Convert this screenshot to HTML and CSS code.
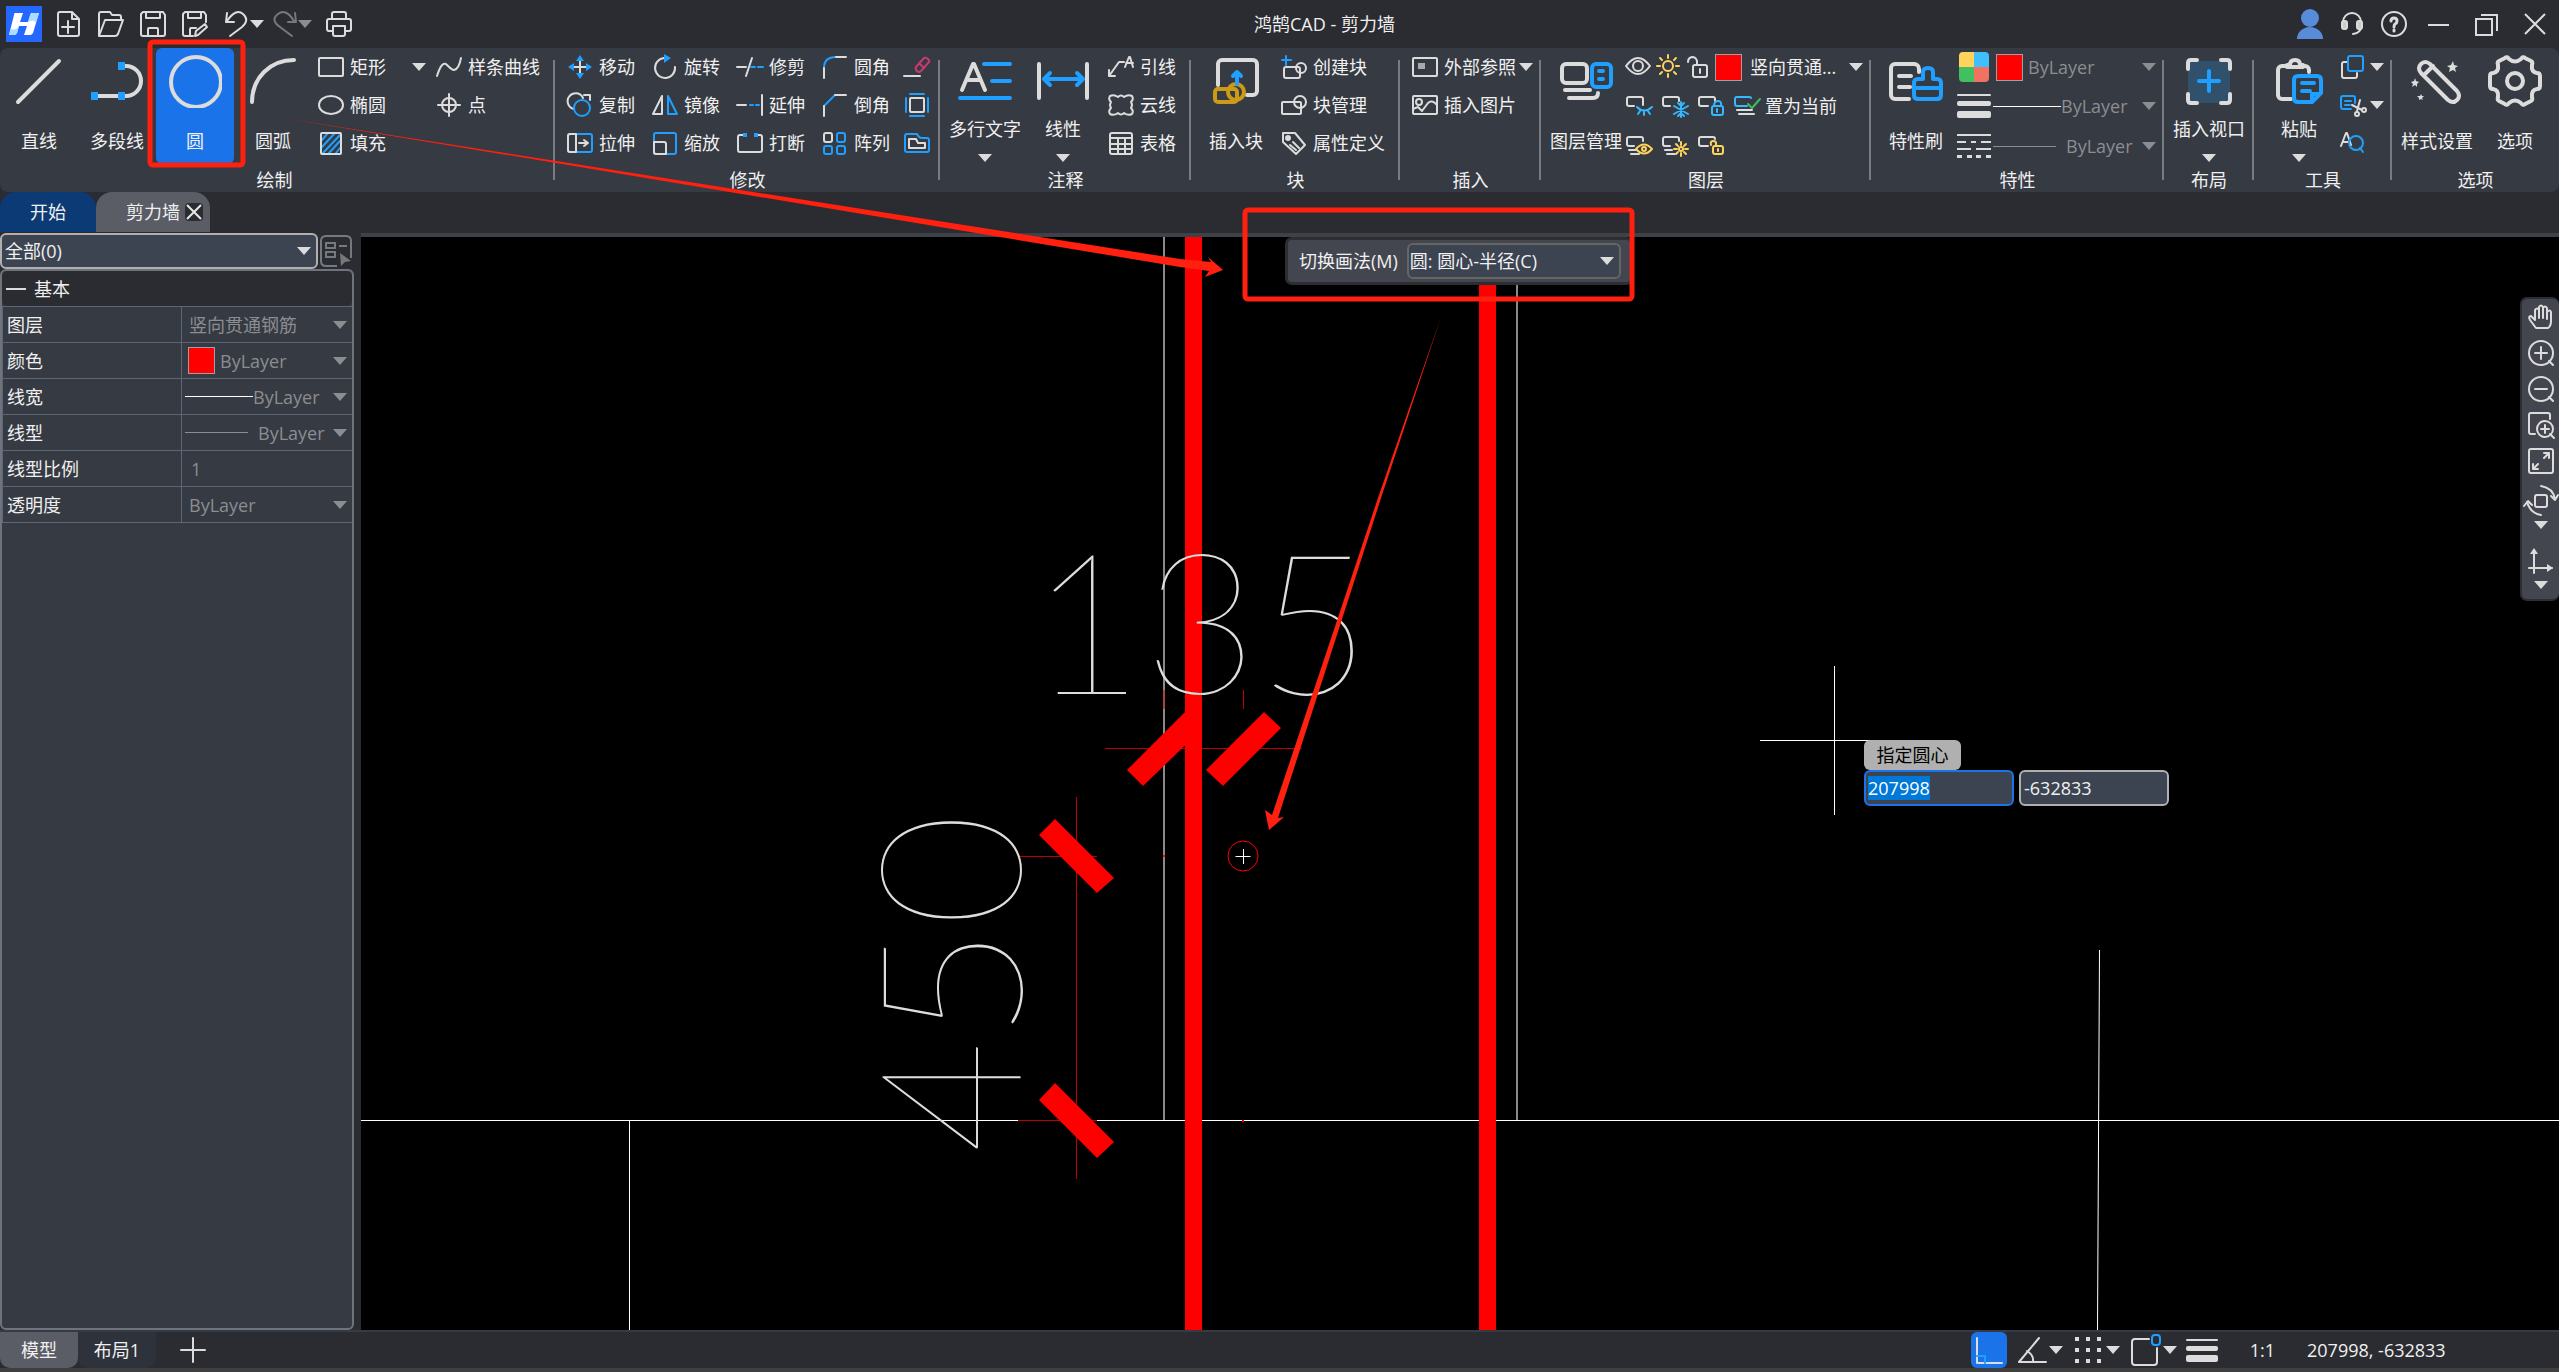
FILE: index.html
```html
<!DOCTYPE html>
<html lang="zh-CN">
<head>
<meta charset="utf-8">
<title>鸿鹄CAD - 剪力墙</title>
<link rel="stylesheet" href="styles.css">
</head>
<body>
<div class="app">
<header class="titlebar">
  <div class="quick">
    <svg class="logo" viewBox="0 0 36 36" aria-hidden="true"><rect width="36" height="36" fill="#2468ff"/><path d="M9 7h8l-3 9h8l3-9h8l-6 20q-1 2-3 2h-6l3-9h-8l-2 7q-1 2-3 2H3L8 9q0-2 1-2z" fill="#fff"/><path d="M3 29l2-6q5 2 8-3l-2 7q-1 2-3 2zM33 7l-3 9q-4-3-8 0l2-7q1-2 3-2z" fill="#a9dcff"/></svg>
    <button aria-label="新建"><svg class="i" viewBox="0 0 26 26"><path d="M4 1h12l7 7v15q0 2-2 2H4q-2 0-2-2V3q0-2 2-2zM16 1v7h7M12 10v12M6 16h12"/></svg></button>
    <button aria-label="打开"><svg class="i" viewBox="0 0 26 26"><path d="M1 25V3q0-2 2-2h9l2 3h7q2 0 2 2v3M1 25L7 9h18l-5 14q-1 2-3 2z"/></svg></button>
    <button aria-label="保存"><svg class="i" viewBox="0 0 26 26"><path d="M3 1h20l2 3v19q0 2-2 2H3q-2 0-2-2V3zM6 1v6h14V1M8 25v-7q0-1 1-1h8q1 0 1 1v7"/></svg></button>
    <button aria-label="另存为"><svg class="i" viewBox="0 0 26 26"><path d="M11 25H3q-2 0-2-2V3l2-2h19l2 3v7M6 1v6h13V1M8 25v-7q0-1 1-1h5M13 25l1-5 9-7 2 3-9 8z"/></svg></button>
    <button class="narrow" aria-label="撤销"><svg class="i" viewBox="0 0 26 26"><path d="M3 2l-1 9h8M3 10Q12-3 19 3T18 16L6 25"/></svg></button>
    <button class="arrow" aria-label="撤销列表"><span class="tri"></span></button>
    <button class="narrow dim" aria-label="重做"><svg class="i" viewBox="0 0 26 26"><path d="M23 2l1 9h-8M22 10Q14-3 6 3T8 16l12 9"/></svg></button>
    <button class="arrow dim" aria-label="重做列表"><span class="tri"></span></button>
    <button class="print" aria-label="打印"><svg class="i" viewBox="0 0 26 26"><path d="M6 8V3q0-2 2-2h10q2 0 2 2v5M6 20H3q-2 0-2-2V10q0-2 2-2h20q2 0 2 2v8q0 2-2 2h-3M7 15h12v8q0 2-2 2H9q-2 0-2-2z"/></svg></button>
  </div>
  <h1>鸿鹄CAD - 剪力墙</h1>
  <div class="window">
    <button aria-label="用户"><svg viewBox="0 0 26 30" width="26" height="30" fill="#588cd9"><circle cx="13" cy="9" r="9"/><path d="M0 30a13 12 0 0 1 26 0z"/></svg></button>
    <button aria-label="客服"><svg class="i" viewBox="0 0 26 26"><path d="M4 11a9 9 0 0 1 18 0M22 15q0 7-8 8"/><rect x="3" y="10" width="5" height="8" rx="2" fill="#ccc"/><rect x="18" y="10" width="5" height="8" rx="2" fill="#ccc"/></svg></button>
    <button aria-label="帮助"><svg class="i" viewBox="0 0 26 26"><circle cx="13" cy="13" r="12"/><path d="M10 10q0-3 3-3t3 3q0 2-2 3-1 1-1 3M13 19v1" stroke-width="3"/></svg></button>
    <button aria-label="最小化"><svg class="i thin" viewBox="0 0 26 26"><path d="M2 14h21"/></svg></button>
    <button aria-label="还原"><svg class="i thin" viewBox="0 0 26 26"><path d="M2 8h16v16H2zM7 4h16v16"/></svg></button>
    <button aria-label="关闭"><svg class="i thin" viewBox="0 0 26 26"><path d="M3 3l20 20M23 3L3 23"/></svg></button>
  </div>
</header>

<nav class="ribbon" aria-label="功能区">
  <section class="group first">
    <div class="body">
      <button class="big"><svg viewBox="0 0 54 54"><path d="M6 48L47 7"/></svg>直线</button>
      <button class="big"><svg viewBox="0 0 54 54"><path d="M4 42H36a15 15 0 0 0 0-30H31"/><path class="bf" d="M1 38h7v8H1zM28 38h7v8h-7zM28 8h7v8h-7z"/></svg>多段线</button>
      <button class="big on"><svg viewBox="0 0 54 54"><circle cx="28" cy="28" r="25"/></svg>圆</button>
      <button class="big"><svg viewBox="0 0 54 54"><path d="M6 48C6 24 24 6 48 6"/></svg>圆弧</button>
      <div class="cells draw">
        <div class="split"><button class="small"><svg class="i" viewBox="0 0 26 26"><rect x="1" y="4" width="24" height="18" rx="1"/></svg>矩形</button><button class="arrow" aria-label="矩形选项"><span class="tri"></span></button></div>
        <button class="small"><svg class="i" viewBox="0 0 26 26"><path d="M1 22Q6 6 11 11t7 5Q23 15 25 4"/></svg>样条曲线</button>
        <button class="small"><svg class="i" viewBox="0 0 26 26"><ellipse cx="13" cy="13" rx="12" ry="9"/></svg>椭圆</button>
        <button class="small"><svg class="i" viewBox="0 0 26 26"><circle cx="13" cy="13" r="7"/><path d="M13 2v22M2 13h22"/></svg>点</button>
        <button class="small"><svg class="i" viewBox="0 0 26 26"><path class="b" d="M4 10l6-7M4 17L17 3M5 23L22 5M11 23L22 11M18 23l4-5"/><rect x="3" y="3" width="20" height="21" rx="1"/></svg>填充</button>
      </div>
    </div>
    <h2>绘制</h2>
  </section>

  <section class="group">
    <div class="body">
      <div class="cells modify">
        <button class="small"><svg class="i" viewBox="0 0 26 26"><path d="M5 13h16M13 5v16"/><path class="bf" d="M13 1l4 6H9zM13 25l4-6H9zM1 13l6-4v8zM25 13l-6-4v8z"/></svg>移动</button>
        <button class="small"><svg class="i" viewBox="0 0 26 26"><path d="M12 4a10 10 0 1 0 11 9"/><path class="bf" d="M12 0l7 4-7 5z"/></svg>旋转</button>
        <button class="small"><svg class="i" viewBox="0 0 26 26"><path d="M0 13h9M9 22l6-18"/><path class="b" d="M14 13h4M21 13h5"/></svg>修剪</button>
        <button class="small"><svg class="i" viewBox="0 0 26 26"><path class="b" d="M2 14Q2 3 14 3"/><path d="M2 14v10M14 3h10"/></svg>圆角</button>
        <button class="small" aria-label="删除"><svg class="i" viewBox="0 0 26 26"><path d="M0 22h16"/><path class="pk" d="M12 13l8-9q2-1 4 1t1 3l-8 9q-2 2-4 0t-1-4zM16 10l4 4"/></svg></button>
        <button class="small"><svg class="i" viewBox="0 0 26 26"><path d="M7 17a8 8 0 1 1 9-11M17 3h6v5"/><circle class="b" cx="15" cy="16" r="8"/></svg>复制</button>
        <button class="small"><svg class="i" viewBox="0 0 26 26"><path d="M10 4v18H1z"/><path class="b" d="M16 4v18h9z"/></svg>镜像</button>
        <button class="small"><svg class="i" viewBox="0 0 26 26"><path d="M0 13h9M25 3v20"/><path class="b" d="M13 13h3M19 13h3"/></svg>延伸</button>
        <button class="small"><svg class="i" viewBox="0 0 26 26"><path class="b" d="M2 14L13 3"/><path d="M2 14v10M13 3h11"/></svg>倒角</button>
        <button class="small" aria-label="偏移"><svg class="i" viewBox="0 0 26 26"><rect x="6" y="6" width="14" height="14" rx="1"/><path class="b" d="M6 2h14M6 24h14M2 6v14M24 6v14"/></svg></button>
        <button class="small"><svg class="i" viewBox="0 0 26 26"><rect class="b" x="1" y="4" width="24" height="18" rx="2"/><path d="M9 4H3q-2 0-2 2v14q0 2 2 2h6zM12 13h8M17 10l4 3-4 3"/></svg>拉伸</button>
        <button class="small"><svg class="i" viewBox="0 0 26 26"><rect class="b" x="2" y="3" width="22" height="21" rx="2"/><path d="M2 12h10q2 0 2 2v10H4q-2 0-2-2z"/></svg>缩放</button>
        <button class="small"><svg class="i" viewBox="0 0 26 26"><path d="M6 5H3q-2 0-2 2v13q0 2 2 2h20q2 0 2-2V7q0-2-2-2h-3"/><path class="bf" d="M6 3h4v4H6zM17 3h4v4h-4z"/></svg>打断</button>
        <button class="small"><svg class="i" viewBox="0 0 26 26"><rect x="2" y="3" width="8" height="9" rx="2"/><g class="b"><rect x="15" y="3" width="8" height="9" rx="2"/><rect x="2" y="16" width="8" height="8" rx="2"/><rect x="15" y="16" width="8" height="8" rx="2"/></g></svg>阵列</button>
        <button class="small" aria-label="分解"><svg class="i" viewBox="0 0 26 26"><path class="b" d="M3 4h10q2 4 5 4h5q2 0 2 2v10q0 2-2 2H3q-2 0-2-2V6q0-2 2-2z"/><path d="M5 9h7l2 4h7v5H5z"/></svg></button>
      </div>
    </div>
    <h2>修改</h2>
  </section>

  <section class="group">
    <div class="body">
      <button class="big menu"><svg viewBox="0 0 54 54"><path d="M4 36L15 10h1L27 36M9 26h13"/><path class="b" d="M26 10H52M34 27H52M2 44H52"/></svg>多行文字<span class="tri"></span></button>
      <button class="big menu"><svg viewBox="0 0 54 54"><path d="M3 10v34M51 10v34"/><path class="b" d="M9 25H46M14 19l-6 6 6 6M41 19l6 6-6 6"/></svg>线性<span class="tri"></span></button>
      <div class="cells one">
        <button class="small"><svg class="i" viewBox="0 0 26 26"><path d="M1 22L11 8h5M1 16v6h6M17 13l4-10h1l3 10M18 9h7"/></svg>引线</button>
        <button class="small"><svg class="i" viewBox="0 0 26 26"><path d="M2 4q4-2 8 1 3-3 6 0 4-3 8-1 2 3-1 6 2 3 0 6 3 3 1 6-4 2-8-1-3 3-6 0-4 3-8 1-2-3 1-6-2-3 0-6-3-3-1-6z"/></svg>云线</button>
        <button class="small"><svg class="i" viewBox="0 0 26 26"><rect x="2" y="3" width="22" height="21" rx="2"/><path d="M2 8h22M2 14h22M2 19h22M10 8v16M17 8v16"/></svg>表格</button>
      </div>
    </div>
    <h2>注释</h2>
  </section>

  <section class="group">
    <div class="body">
      <button class="big"><svg viewBox="0 0 54 54"><path d="M9 31V10a4 4 0 0 1 4-4H44a4 4 0 0 1 4 4V37a4 4 0 0 1-4 4H38"/><g class="y"><rect x="6" y="35" width="22" height="13" rx="3"/><circle cx="27" cy="38" r="8"/></g><path class="b" d="M28 30V18M24 22l4-4 4 4"/></svg>插入块</button>
      <div class="cells one">
        <button class="small"><svg class="i" viewBox="0 0 26 26"><rect x="3" y="13" width="16" height="11" rx="2"/><circle cx="20" cy="14" r="5"/><path class="b" d="M5 2v9M1 6h9"/></svg>创建块</button>
        <button class="small"><svg class="i" viewBox="0 0 26 26"><rect x="1" y="10" width="19" height="12" rx="1"/><circle cx="19" cy="10" r="6"/></svg>块管理</button>
        <button class="small"><svg class="i" viewBox="0 0 26 26"><path d="M2 3h12l10 12-9 9L2 12zM12 12l6 6M9 15l6 5"/><circle cx="7" cy="8" r="2" fill="#dcdcdc"/></svg>属性定义</button>
      </div>
    </div>
    <h2>块</h2>
  </section>

  <section class="group">
    <div class="body">
      <div class="cells one wide">
        <div class="split"><button class="small"><svg class="i" viewBox="0 0 26 26"><rect x="1" y="4" width="24" height="18" rx="1"/><path d="M6 9h7v6H6z" fill="#aaa" stroke="none"/></svg>外部参照</button><button class="arrow" aria-label="外部参照选项"><span class="tri"></span></button></div>
        <button class="small"><svg class="i" viewBox="0 0 26 26"><rect x="1" y="4" width="24" height="18" rx="1"/><circle cx="7" cy="10" r="3"/><path d="M1 17l5-2 4 4 6-8q4-4 9 2"/></svg>插入图片</button>
      </div>
    </div>
    <h2>插入</h2>
  </section>

  <section class="group">
    <div class="body">
      <button class="big"><svg viewBox="0 0 54 54"><rect x="3" y="10" width="25" height="19" rx="4"/><path d="M6 36H31M10 44H34Q39 44 39 39"/><g class="b"><rect x="33" y="10" width="19" height="23" rx="4"/><path d="M40 17h4M40 25h4"/></g></svg>图层管理</button>
      <div class="layers">
        <div class="lrow">
          <button aria-label="显示"><svg class="i" viewBox="0 0 26 26"><path d="M1 12Q13-4 25 12 13 28 1 12z"/><circle cx="13" cy="12" r="5"/></svg></button>
          <button aria-label="冻结"><svg class="i yl" viewBox="0 0 26 26"><circle cx="13" cy="12" r="5"/><path d="M13 1v3M13 20v3M2 12h3M21 12h3M5 4l2 2M19 18l2 2M5 20l2-2M19 6l2-2"/></svg></button>
          <button aria-label="锁定"><svg class="i" viewBox="0 0 26 26"><rect x="8" y="11" width="14" height="12" rx="2"/><path d="M12 11V7q-1-4-5-4-4 1-4 5M15 15v4"/></svg></button>
          <span class="swatch"></span>
          <label class="drop layer"><select aria-label="当前图层"><option>竖向贯通...</option></select></label>
        </div>
        <div class="lrow two">
          <button aria-label="关闭图层"><svg class="i" viewBox="0 0 28 26"><path d="M9 13H4q-2 0-2-2V6q0-2 2-2h12q2 0 2 2v6"/><path class="c" d="M12 14q7 7 15 0M13 21l2-3M19 22v-4M25 21l-2-3"/></svg></button>
          <button aria-label="冻结图层"><svg class="i" viewBox="0 0 28 26"><path d="M9 13H4q-2 0-2-2V6q0-2 2-2h12q2 0 2 2v2"/><path class="c" d="M20 9v15M13 13l14 8M27 13l-14 8M17 10l3 3 3-3M17 23l3-3 3 3"/></svg></button>
          <button aria-label="锁定图层"><svg class="i" viewBox="0 0 28 26"><path d="M11 13H4q-2 0-2-2V6q0-2 2-2h12q2 0 2 2v2"/><g class="c"><rect x="15" y="13" width="11" height="9" rx="2"/><path d="M17 13q0-5 4-5t3 5M20 16v3"/></g></svg></button>
          <button class="small current"><svg class="i" viewBox="0 0 28 26"><path class="c" d="M14 13H4q-2 0-2-2V6q0-2 2-2h12q2 0 2 1"/><path d="M4 17h15M6 21h15"/><path d="M15 11l4 4 8-9" stroke="#3cbf5c"/></svg>置为当前</button>
        </div>
        <div class="lrow two">
          <button aria-label="打开图层"><svg class="i" viewBox="0 0 28 26"><path d="M9 13H4q-2 0-2-2V6q0-2 2-2h12q2 0 2 2v2M4 17h7M6 21h8"/><path class="yl" d="M11 16q8-9 16 0-8 9-16 0z"/><circle class="yl" cx="19" cy="16" r="2"/></svg></button>
          <button aria-label="解冻图层"><svg class="i" viewBox="0 0 28 26"><path d="M9 13H4q-2 0-2-2V6q0-2 2-2h12q2 0 2 2v2M4 17h7M6 21h8"/><g class="yl"><circle cx="20" cy="16" r="2"/><path d="M20 9v3M20 20v3M13 16h3M24 16h3M15 11l2 2M23 19l2 2M15 21l2-2M23 13l2-2"/></g></svg></button>
          <button aria-label="解锁图层"><svg class="i" viewBox="0 0 28 26"><path d="M11 13H4q-2 0-2-2V6q0-2 2-2h12q2 0 2 2"/><g class="yl"><rect x="16" y="13" width="10" height="8" rx="2"/><path d="M19 13V10q0-2-3-2t-2 4M21 16v2"/></g></svg></button>
        </div>
      </div>
    </div>
    <h2>图层</h2>
  </section>

  <section class="group">
    <div class="body">
      <button class="big"><svg viewBox="0 0 54 54"><path d="M20 45H6a4 4 0 0 1-4-4V14a4 4 0 0 1 4-4H25a5 5 0 0 1 5 5V18M10 22H22M10 33H21"/><g class="b"><path d="M33 25h1V18q0-4 5-4t5 4v7h4q4 0 4 4v12q0 4-4 4H29q-4 0-4-4V29q0-4 4-4zM25 34H52"/></g></svg>特性刷</button>
      <div class="props">
        <div class="prow"><svg class="g30" viewBox="0 0 34 30" aria-hidden="true"><path d="M2 4q0-4 4-4h11v15H2z" fill="#ffd35c"/><path d="M17 0h11q4 0 4 4v11H17z" fill="#40bfff"/><path d="M2 15h15v15H6q-4 0-4-4z" fill="#40c060"/><path d="M17 15h15v11q0 4-4 4H17z" fill="#f07260"/></svg><span class="swatch"></span><label class="drop dim"><select aria-label="颜色"><option>ByLayer</option></select></label></div>
        <div class="prow"><svg class="g30 solid" viewBox="0 0 34 30" aria-hidden="true"><rect y="3" width="34" height="2" rx="1"/><rect y="10" width="34" height="5" rx="2"/><rect y="20" width="34" height="7" rx="2"/></svg><span class="line w"></span><label class="drop dim"><select aria-label="线宽"><option>ByLayer</option></select></label></div>
        <div class="prow"><svg class="g30 solid" viewBox="0 0 34 30" aria-hidden="true"><path d="M0 3h34v2H0zM0 10h9v2H0zM14 10h5v2h-5zM24 10h10v2H24zM0 17h14v2H0zM19 17h15v2H19zM0 24h5v3H0zM10 24h5v3h-5zM19 24h5v3h-5zM29 24h5v3h-5z"/></svg><span class="line g"></span><label class="drop dim"><select aria-label="线型"><option>ByLayer</option></select></label></div>
      </div>
    </div>
    <h2>特性</h2>
  </section>

  <section class="group even">
    <div class="body">
      <button class="big menu"><svg viewBox="0 0 54 54"><rect x="6" y="7" width="42" height="42" fill="#31506b" stroke="none"/><path d="M6 15V9q0-3 3-3h6M39 6h6q3 0 3 3v6M48 40v6q0 3-3 3h-6M15 49H9q-3 0-3-3v-6"/><path class="b" d="M27 17v20M17 27h20"/></svg>插入视口<span class="tri"></span></button>
    </div>
    <h2>布局</h2>
  </section>

  <section class="group">
    <div class="body">
      <button class="big menu"><svg viewBox="0 0 54 54"><path d="M19 45H10a4 4 0 0 1-4-4V16a4 4 0 0 1 4-4h5M30 12h3a4 4 0 0 1 4 4v2M15 13v-2h3q0-5 5-5t5 5h3v2z"/><g class="b"><path d="M26 22H45q4 0 4 4V39l-9 9H26q-4 0-4-4V26q0-4 4-4zM40 48v-8h8M30 29H42M30 37H38"/></g></svg>粘贴<span class="tri"></span></button>
      <div class="cells tools">
        <div class="split"><button aria-label="复制"><svg class="i" viewBox="0 0 26 26"><path d="M8 8H4q-2 0-2 2v12q0 2 2 2h11q2 0 2-2v-3"/><rect class="b" x="8" y="2" width="15" height="15" rx="2"/></svg></button><button class="arrow" aria-label="复制选项"><span class="tri"></span></button></div>
        <div class="split"><button aria-label="剪切"><svg class="i" viewBox="0 0 26 26"><path class="b" d="M11 17H3q-2 0-2-2V6q0-2 2-2h10q2 0 2 2v5M5 9h6M5 13h5"/><path d="M12 13l10 5M20 8l-3 11"/><circle cx="17" cy="22" r="2"/><circle cx="24" cy="18" r="2"/></svg></button><button class="arrow" aria-label="剪切选项"><span class="tri"></span></button></div>
        <button aria-label="查找"><svg class="i" viewBox="0 0 26 26"><path d="M1 16L6 3h1l4 12M3 12h5"/><g class="b"><circle cx="16" cy="13" r="7"/><path d="M20 18l3 4"/></g></svg></button>
      </div>
    </div>
    <h2>工具</h2>
  </section>

  <section class="group last">
    <div class="body">
      <button class="big"><svg viewBox="0 0 54 54"><path d="M11 19q-4-5 0-9t9 0L47 37q4 5 0 9t-9 0zM14 21l9-9"/><path class="star" d="M43 7l1 4 4 1-3 2 1 4-3-2-4 2 1-4-3-2 4-1zM5 24l1 3 3 1-2 2v3l-2-2-3 2 1-3-2-2 3-1zM11 40l1 2h2l-2 2 1 2-2-1-2 1v-2l-2-2h3z"/></svg>样式设置</button>
      <button class="big"><svg viewBox="0 0 54 54"><path d="M17 4q2-2 4 1 6 5 12 0 2-3 4-1l6 3q2 1 1 4-1 7 5 8 3 0 3 3v10q0 3-3 3-6 1-5 8 1 3-1 4l-6 3q-2 2-4-1-6-5-12 0-2 3-4 1l-6-3q-2-1-1-4 1-7-5-8-3 0-3-3V22q0-3 3-3 6-1 5-8-1-3 1-4z"/><circle cx="27" cy="27" r="8"/></svg>选项</button>
    </div>
    <h2>选项</h2>
  </section>
</nav>

<div class="tabs" role="tablist">
  <button class="tab start" role="tab">开始</button>
  <div class="tab doc"><button role="tab" aria-selected="true">剪力墙</button><button class="close" aria-label="关闭剪力墙"><svg viewBox="0 0 18 18"><path d="M2 2l14 14M16 2L2 16"/></svg></button></div>
</div>

<main>
  <aside>
    <div class="filter">
      <label class="drop box"><select aria-label="选择集"><option>全部(0)</option></select></label>
      <button aria-label="快速选择"><svg viewBox="0 0 32 32"><path d="M17 31H6q-5 0-5-5V6q0-5 5-5h20q5 0 5 5v17M6 8h9v5H6zM6 17h9v5H6zM19 11h8"/><path d="M20 18l11 8-6 1-4 4z" fill="#777"  stroke="none"/></svg></button>
    </div>
    <section class="panel">
      <button class="fold"><span></span>基本</button>
      <table>
        <tr><th>图层</th><td><label class="drop dim pad"><select aria-label="图层"><option>竖向贯通钢筋</option></select></label></td></tr>
        <tr><th>颜色</th><td><div class="val"><span class="swatch"></span><label class="drop dim"><select aria-label="对象颜色"><option>ByLayer</option></select></label></div></td></tr>
        <tr><th>线宽</th><td><div class="val"><span class="line w"></span><label class="drop dim"><select aria-label="对象线宽"><option>ByLayer</option></select></label></div></td></tr>
        <tr><th>线型</th><td><div class="val"><span class="line g"></span><label class="drop dim"><select aria-label="对象线型"><option>ByLayer</option></select></label></div></td></tr>
        <tr><th>线型比例</th><td><input class="plain" aria-label="线型比例" value="1"></td></tr>
        <tr><th>透明度</th><td><label class="drop dim pad"><select aria-label="透明度"><option>ByLayer</option></select></label></td></tr>
      </table>
    </section>
  </aside>

  <section class="canvas" aria-label="绘图区">
    <svg class="drawing" viewBox="361 237 2198 1093" preserveAspectRatio="xMinYMin slice">
      <g stroke="#8a8a8a" stroke-width="2"><path d="M1164 237V1121M1517 237V1121"/></g>
      <g stroke="#fff" fill="none"><path d="M361 1120.500H2559M629.500 1121V1330M2099.500 950L2097.500 1330M1834.500 666V815M1760 740.500H1870"/></g>
      <g stroke="#c00000" stroke-width="1" fill="none"><path d="M1105 748.500H1302M1076.500 797V1179M1018 856.500H1097M1018 1120.500H1097M1164 690V709M1243.500 690V709"/></g>
      <g fill="#f00"><path d="M1185 237h17v1093h-17zM1479 237h17v1093h-17z"/><path d="M1127 770l58-58 17 17-59 57zM1206 770l58-58 17 16-58 58zM1055 819l59 59-17 15-58-58zM1055 1083l59 59-17 16-58-58z"/><path d="M1163 855h2v2h-2zM1242 1120h2v2h-2z"/></g>
      <text class="dim-text" x="1030" y="694">135</text>
      <text class="dim-text" transform="translate(1021 1154) rotate(-90)">450</text>
      <circle cx="1243" cy="856" r="15" fill="none" stroke="#f00"/><path d="M1235.500 856.500h15M1243.500 849v15" stroke="#fff"/>
    </svg>

    <div class="method"><label for="method">切换画法(M)</label><span class="drop box"><select id="method"><option>圆: 圆心-半径(C)</option></select></span></div>

    <div class="dynamic">
      <span class="hint">指定圆心</span>
      <div class="coords"><input id="px" aria-label="圆心 X" value="207998"><input aria-label="圆心 Y" value="-632833"></div>
    </div>

    <div class="view">
      <button aria-label="平移"><svg class="i" viewBox="0 0 26 26"><path d="M8 24L2 16q-2-4 1-4l4 4V6q2-3 4 0v8V3q2-3 4 0v11V4q2-3 4 0v11V8q3-3 4 0v9q0 5-3 7z"/></svg></button>
      <button aria-label="放大"><svg class="i" viewBox="0 0 26 26"><circle cx="13" cy="13" r="12"/><path d="M7 13h12M13 7v12M21 21l4 4"/></svg></button>
      <button aria-label="缩小"><svg class="i" viewBox="0 0 26 26"><circle cx="13" cy="13" r="12"/><path d="M7 13h12M21 21l4 4"/></svg></button>
      <button aria-label="窗口缩放"><svg class="i" viewBox="0 0 26 26"><path d="M7 22H3q-2 0-2-2V3q0-2 2-2h17q2 0 2 2v4"/><circle cx="17" cy="17" r="8"/><path d="M13 17h8M17 13v8M22 22l4 4"/></svg></button>
      <button aria-label="全部缩放"><svg class="i" viewBox="0 0 26 26"><rect x="1" y="1" width="24" height="24" rx="2"/><path d="M16 5h5v5M21 5l-5 5M5 16v5h5M5 21l5-5"/></svg></button>
      <button class="orbit" aria-label="动态观察"><svg class="i" viewBox="0 0 34 34"><rect x="11" y="11" width="12" height="12" rx="2"/><path d="M17 2q12 2 14 13M27 12l4 4 3-5M17 31Q6 29 3 18M0 22l4-5 4 4"/></svg><span class="tri"></span></button>
      <button class="axes" aria-label="坐标系"><svg class="i" viewBox="0 0 26 26"><path d="M6 26V3M1 21h23"/><path d="M2 7l4-6 4 6zM19 17l6 4-6 4z" fill="#dcdcdc" stroke="none"/></svg><span class="tri"></span></button>
    </div>
  </section>
</main>

<footer>
  <button class="sheet on">模型</button><button class="sheet">布局1</button>
  <button class="add" aria-label="新建布局"><svg class="i" viewBox="0 0 26 26"><path d="M13 1v24M1 13h24"/></svg></button>
  <div class="status">
    <button class="ortho" aria-label="正交"><svg class="i" viewBox="0 0 36 36"><path d="M6 6v25h25"/><path class="b" d="M6 24h8v7"/></svg></button>
    <button class="snap" aria-label="极轴"><svg class="i" viewBox="0 0 30 30"><path d="M22 3L2 27h27M10 16q7 4 6 11"/></svg><span class="tri"></span></button>
    <button class="snap" aria-label="栅格"><svg class="i" viewBox="0 0 30 30"><path stroke-width="4" stroke-linecap="butt" d="M1 4h4M12 4h4M23 4h4M1 15h4M12 15h4M23 15h4M1 26h4M12 26h4M23 26h4"/></svg><span class="tri"></span></button>
    <button class="snap" aria-label="对象捕捉"><svg class="i" viewBox="0 0 30 30"><path d="M18 4H4q-3 0-3 3v20q0 3 3 3h19q3 0 3-3V13"/><rect class="b" x="21" y="0" width="8" height="10" rx="3"/></svg><span class="tri"></span></button>
    <button class="weight" aria-label="线宽显示"><svg class="solid" viewBox="0 0 32 30"><rect y="4" width="32" height="2" rx="1"/><rect y="11" width="32" height="5" rx="2"/><rect y="20" width="32" height="7" rx="2"/></svg></button>
    <span class="scale">1:1</span><span class="pos">207998, -632833</span>
  </div>
</footer>
</div>

<svg class="callout" width="2559" height="1372" aria-hidden="true">
  <g fill="none" stroke="#ff2010" stroke-width="5"><rect x="150" y="42" width="93" height="123" rx="3"/><rect x="1245" y="210" width="387" height="89" rx="3"/></g>
  <g fill="#ff2010"><path d="M283 118L550 160l630 99 31 3-3-5 15 13-18 7 4-6-29-4L550 162z"/><path d="M1441 317l-59 178-104 323 6-1-15 13-4-20 7 5L1379 495z"/></g>
</svg>
<script>
const x = document.getElementById('px');
x.focus();
x.select();
</script>
</body>
</html>
```
FILE: styles.css
```css
* { box-sizing: border-box; }
html, body { height: 100%; margin: 0; }
body { position: relative; overflow: hidden; background: #2b2c31; color: #f0f0f0; font: 18px/24px "Open Sans", "Noto Sans CJK SC", sans-serif; }
button, select, input { font: inherit; color: inherit; background: none; border: 0; margin: 0; padding: 0; outline: 0; }
button { white-space: nowrap; }
h1, h2 { margin: 0; font-size: 18px; font-weight: 400; }
.app { display: flex; flex-direction: column; min-height: 100%; }

.i { width: 26px; height: 26px; display: block; flex: none; overflow: visible; fill: none; stroke: #dcdcdc; stroke-width: 2; stroke-linecap: round; stroke-linejoin: round; }
.i.thin { stroke-linecap: butt; stroke-linejoin: miter; }
.b { stroke: #1f9fff; }
.bf { fill: #1f9fff; stroke: none; }
.c { stroke: #35b8ff; }
.y { stroke: #cc9a16; }
.yl { stroke: #ffd35c; }
.pk { stroke: #c93a72; }
.solid { fill: #dcdcdc; }
.tri { display: block; flex: none; border: 7px solid transparent; border-top: 8px solid #dcdcdc; border-bottom: 0; }
.dim .tri { border-top-color: #8b8d91; }
.dim .i { stroke: #77787c; }

.titlebar { height: 48px; display: flex; align-items: center; }
.quick, .window { display: flex; align-items: center; }
.quick { padding-left: 6px; }
.logo { width: 36px; height: 36px; margin-right: 6px; }
.quick button { width: 42px; display: flex; justify-content: center; }
.quick .narrow { width: 34px; justify-content: flex-end; }
.quick .arrow { width: 14px; }
.quick .print { margin-left: 6px; }
.titlebar h1 { flex: 1; text-align: center; }
.window button { width: 42px; height: 48px; display: flex; align-items: center; justify-content: center; }
.window button:nth-child(n+4) { width: 48px; }

.ribbon { display: flex; height: 144px; background: #363a42; border-radius: 8px; }
.group { position: relative; display: flex; flex-direction: column; flex: none; justify-content: space-between; padding-left: 6px; }
.group.first { padding-left: 0; }
.group.last { flex: 1; }
.group.even { padding-right: 6px; }
.group:not(.last)::after { content: ""; position: absolute; right: 0; top: 12px; width: 2px; height: 120px; background: #787b81; }
.group h2 { text-align: center; margin-left: -6px; }
.group.even h2 { margin: 0; }
.body { display: flex; height: 116px; }
.big { width: 78px; height: 116px; padding-top: 6px; display: flex; flex-direction: column; align-items: center; }
.big svg { width: 54px; height: 54px; margin-bottom: 21px; fill: none; stroke: #dcdcdc; stroke-width: 4; stroke-linecap: round; stroke-linejoin: round; }
.big svg .bf, .big svg .star { stroke: none; }
.star { fill: #dcdcdc; }
.big.menu svg { margin-bottom: 9px; }
.big .tri { margin-top: 13px; }
.big.on { background: #1a73e8; border-radius: 6px; }
.cells { display: grid; grid-auto-rows: 38px; align-content: start; align-items: center; }
.cells.draw { grid-template-columns: 118px 125px; }
.cells.modify { grid-template-columns: repeat(4, 85px) 39px; }
.modify .small:nth-child(5n) { padding-left: 3px; }
.cells.one { min-width: 89px; padding-right: 8px; }
.big:first-child + .one { min-width: 125px; }
.cells.wide { min-width: 135px; }
.cells.tools { width: 54px; padding-left: 2px; }
.small { display: flex; align-items: center; gap: 6px; padding-left: 6px; }
.split { display: flex; align-items: center; }
.draw .split { justify-content: space-between; padding-right: 4px; }
.wide .split { gap: 3px; }
.cells.wide { padding-right: 6px; }
.tools .split { gap: 4px; }
.layers { width: 246px; }
.lrow { display: flex; height: 40px; align-items: center; gap: 5px; }
.lrow:first-child { height: 38px; gap: 4px; }
.lrow.two { gap: 8px; }
.lrow .current { gap: 4px; padding-left: 0; }
.lrow.two .i { width: 28px; }
.swatch { width: 27px; height: 27px; flex: none; background: #f00; border: 1px solid #a0a0a0; }
.layer { margin: 0 8px 0 4px; }
.drop { position: relative; flex: 1; min-width: 0; display: flex; align-items: center; }
.drop::after { content: ""; position: absolute; right: 0; border: 7px solid transparent; border-top: 8px solid #dcdcdc; border-bottom: 0; pointer-events: none; }
.drop select { appearance: none; width: 100%; height: 24px; }
.drop.dim { color: #8b8d91; }
.drop.dim::after { border-top-color: #8b8d91; }
.props { width: 209px; padding: 0 8px 0 2px; }
.prow { display: flex; align-items: center; height: 40px; gap: 5px; }
.prow:first-child { height: 38px; }
.g30 { width: 34px; height: 30px; flex: none; }
.line { flex: none; width: 68px; height: 1px; background: #fff; margin-right: -5px; margin-left: -3px; }
.line.g { background: #8b8d91; width: 63px; margin-right: 5px; }

.tabs { display: flex; height: 40px; }
.tab { border-radius: 16px 16px 0 0; }
.start { width: 96px; background: #0b3a75; }
.doc { width: 114px; background: #5a5d65; display: flex; align-items: center; gap: 5px; padding-left: 30px; }
.close { width: 18px; height: 18px; border-radius: 4px; background: #2b2c31; }
.close svg { display: block; width: 18px; height: 18px; stroke: #e8e8e8; stroke-width: 2; }

main { flex: 1; display: flex; min-height: 0; padding-top: 1px; }
aside { width: 354px; margin-right: 7px; flex: none; display: flex; flex-direction: column; }
.filter { display: flex; gap: 2px; align-items: center; padding-right: 2px; }
.filter > button svg { display: block; width: 32px; height: 32px; fill: none; stroke: #777980; stroke-width: 2; }
.drop.box { height: 36px; border: 2px solid #b0b0b0; border-radius: 6px; background: #3c4452; padding: 0 4px 0 3px; }
.drop.box::after { right: 5px; }
.panel { flex: 1; border: 2px solid #6f737b; border-radius: 6px; background: #363a42; }
.fold { display: flex; align-items: center; gap: 8px; width: 100%; height: 35px; padding-left: 4px; background: #2b2c31; border-radius: 6px; }
.fold span { width: 20px; height: 2px; background: #dcdcdc; }
table { width: 100%; border-collapse: collapse; table-layout: fixed; }
tr { height: 36px; }
th, td { padding: 0; border: 1px solid #5d6577; border-right: 0; }
th { width: 179px; padding-left: 4px; text-align: left; font-weight: 400; }
.val { display: flex; align-items: center; gap: 5px; padding-left: 6px; }
.val .line { margin-left: -3px; }
td .drop { margin-right: 5px; }
.pad { padding-left: 7px; }
.plain { width: 100%; padding-left: 9px; color: #8b8d91; }

.canvas { position: relative; flex: 1; min-width: 0; background: #000; border-top: 4px solid #3e4148; overflow: hidden; }
.drawing { position: absolute; inset: 0; width: 100%; height: 100%; }
.dim-text { font: 100 196px Lato, sans-serif; fill: #ddd; }
.method { position: absolute; left: 924px; top: 0; height: 48px; width: 348px; display: flex; align-items: center; gap: 9px; padding: 0 9px 0 11px; background: #43464f; border: 3px solid #2c2e34; border-radius: 7px; }
.method label { white-space: nowrap; }
.method .drop.box { border-color: #66655f; padding-left: 1px; }
.dynamic { position: absolute; left: 1503px; top: 503px; }
.hint { display: block; width: 97px; height: 30px; line-height: 30px; text-align: center; color: #000; background: #b0b0b0; border-radius: 6px; }
.coords { display: flex; gap: 5px; }
.coords input { width: 150px; height: 36px; padding: 0 3px; border: 2px solid #b0b0b0; border-radius: 6px; background: #3c4452; }
.coords input:focus { border-color: #1a73e8; padding: 0 2px; }
::selection { background: #0078d7; color: #fff; }
.view { position: absolute; right: 0; top: 60px; width: 39px; border: 2px solid #2c2e34; border-right: 0; border-radius: 7px; background: #43464f; }
.view button { width: 100%; height: 36px; display: flex; flex-direction: column; align-items: center; justify-content: center; }
.view .orbit { height: 56px; justify-content: flex-start; padding-top: 5px; gap: 3px; }
.orbit .i { width: 34px; height: 34px; }
.view .axes { height: 64px; justify-content: flex-start; padding-top: 12px; gap: 8px; }

footer { display: flex; height: 42px; border-top: 2px solid #353a43; border-bottom: 4px solid #403f40; }
.sheet { width: 78px; border-radius: 0 0 10px 10px; background: #2e323b; }
.sheet.on { background: #5a5d65; }
.add { width: 74px; display: flex; align-items: center; justify-content: center; }
.status { margin-left: auto; display: flex; align-items: center; padding-right: 104px; }
.ortho { width: 36px; height: 36px; background: #1a73e8; border-radius: 6px; }
.ortho .i { width: 36px; height: 36px; }
.snap { width: 57px; display: flex; align-items: center; gap: 2px; padding-left: 10px; }
.snap .i { width: 30px; height: 30px; }
.weight { width: 32px; margin-left: 8px; }
.weight svg { display: block; width: 32px; height: 30px; }
.scale { margin: 0 32px; }
.pos { min-width: 148px; }

.callout { position: absolute; left: 0; top: 0; pointer-events: none; }
```
